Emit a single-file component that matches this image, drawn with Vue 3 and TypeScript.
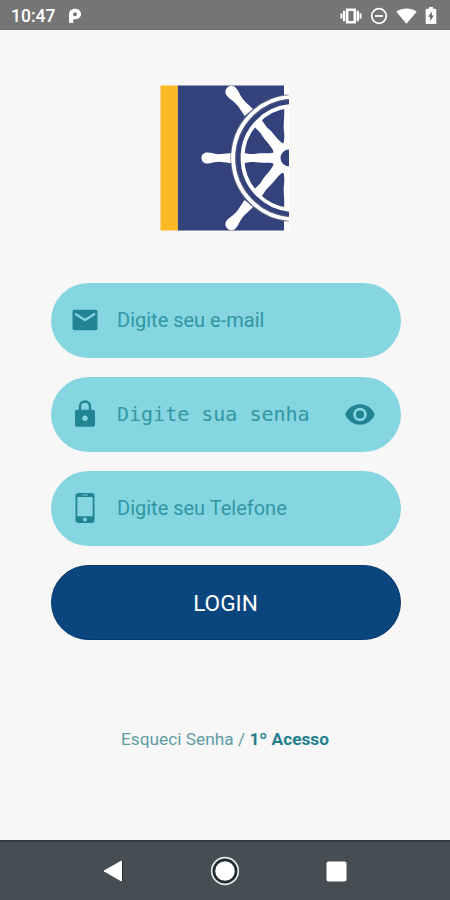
<script setup lang="ts">
import { ref } from 'vue'

const email = ref('')
const password = ref('')
const phone = ref('')
const showPassword = ref(false)

// Rotation and length of each wheel spoke around the hub
const spokes = [
  { angle: 0, scale: 1 },
  { angle: 50, scale: 1.08 },
  { angle: -50, scale: 1.08 },
]
</script>

<template>
  <div class="screen">
    <header class="status">
      <span class="clock">10:47</span>
      <svg class="p-icon" width="14" height="16" viewBox="0 0 14 16">
        <path fill="#fff" fill-rule="evenodd" d="M1 15V6.500C1 3 3.500.8 7 .8s6 2.100 6 5.300-2.400 5.200-5.700 5.200H5.200V15zM7 4.300a2 2 0 1 0 0 4 2 2 0 0 0 0-4z" />
      </svg>
      <div class="status-icons">
        <svg width="22" height="16" viewBox="0 0 22 16" fill="#fff">
          <path fill-rule="evenodd" d="M6 .5h10v15H6zM8.500 3v10h5V3z" />
          <path d="M3 2.700h2.400v10.600H3zM.5 5.500h2v5h-2zM16.600 2.700H19v10.600h-2.400zM19.500 5.500h2v5h-2z" />
        </svg>
        <svg width="18" height="18" viewBox="0 0 18 18">
          <circle cx="9" cy="9" r="7.300" fill="none" stroke="#fff" stroke-width="1.700" />
          <path d="M5 9h8" stroke="#fff" stroke-width="1.800" />
        </svg>
        <svg width="21" height="16" viewBox="0 0 21 16">
          <path fill="#fff" d="M.3 3.800C6.200-.5 14.800-.5 20.700 3.800L10.500 15.800z" />
        </svg>
        <svg width="12" height="17" viewBox="0 0 12 17">
          <path fill="#fff" d="M4 0h4v1.800h2.300a1 1 0 0 1 1 1V16a1 1 0 0 1-1 1H1.700a1 1 0 0 1-1-1V2.800a1 1 0 0 1 1-1H4z" />
          <path fill="#666" d="M6.800 4.500v4h2L5.200 14v-4.200h-2z" />
        </svg>
      </div>
    </header>

    <main class="content">
      <svg class="logo" width="129" height="146" viewBox="160 85 129 146">
        <path fill="#fff" d="M283 85h6v146h-6z" />
        <path fill="#33427b" d="M177.500 85.500H284v145H177.500z" />
        <path fill="#fbba25" d="M160.500 85.500h17.300v145h-17.300z" />
        <path fill="#33427b" d="M283 95h6v126h-6z" />
        <g fill="#fff">
          <g
            v-for="spoke in spokes"
            :key="spoke.angle"
            :transform="`translate(287 158) rotate(${spoke.angle}) scale(${spoke.scale}) translate(-287 -158)`"
          >
            <path d="M201.500 158c0-3.200 2.200-5.500 5.500-5.500 5 0 8 2 14 1.600 4-.3 7-.9 11-1.100v10c-4-.2-7-.8-11-1.100-6-.4-9 1.600-14 1.600-3.300 0-5.500-2.300-5.500-5.500z" />
            <path d="M243 153.200c5 0 8 1.300 13 .5 7-1 11 .3 17-1l10-5v20.600l-10-5c-6-1.300-10 0-17-1-5-.8-8 .5-13 .5z" />
          </g>
          <path d="M284 107h5v42h-8c3-5 4-11 3-18-1-7 1-15 0-24zM284 209h5v-42h-8c3 5 4 11 3 18-1 7 1 15 0 24z" />
        </g>
        <circle cx="294.500" cy="158" r="56.500" fill="none" stroke="#33427b" stroke-width="7" />
        <circle cx="294.500" cy="158" r="63.800" fill="none" stroke="#777786" stroke-width=".8" />
        <circle cx="294.500" cy="158" r="61.200" fill="none" stroke="#fff" stroke-width="4" />
        <circle cx="294.500" cy="158" r="52" fill="none" stroke="#fff" stroke-width="3.800" />
        <circle cx="294.500" cy="158" r="59" fill="none" stroke="#6d708a" stroke-width=".7" />
        <circle cx="289" cy="158" r="13" fill="#fff" />
        <circle cx="289" cy="158" r="8.500" fill="#33427b" />
      </svg>

      <form class="form" @submit.prevent>
        <label class="field">
          <svg class="icon" width="26" height="26" viewBox="0 0 26 26">
            <rect x=".5" y="2.800" width="25" height="20.400" rx="2" fill="#218492" />
            <path d="M3 6.700L13 13l10-6.300" fill="none" stroke="#85d6e1" stroke-width="2.400" />
          </svg>
          <input v-model="email" type="email" placeholder="Digite seu e-mail" />
        </label>
        <label class="field">
          <svg class="icon" width="26" height="28" viewBox="0 0 26 28">
            <path d="M8 11V6.500a5 5 0 0 1 10 0V11" fill="none" stroke="#218492" stroke-width="2.400" />
            <rect x="3" y="9.800" width="20" height="17" rx="2" fill="#218492" />
            <circle cx="13" cy="18.300" r="2.700" fill="#85d6e1" />
          </svg>
          <input v-model="password" class="mono" :type="showPassword ? 'text' : 'password'" placeholder="Digite sua senha" />
          <button class="eye" type="button" @click="showPassword = !showPassword">
            <svg width="30" height="21" viewBox="0 0 30 21">
              <path fill="#218492" fill-rule="evenodd" d="M15 .3C8.200.3 2.500 4.500.2 10.500 2.500 16.500 8.200 20.700 15 20.700s12.500-4.200 14.800-10.200C27.500 4.500 21.800.3 15 .3zM15 17.300a6.800 6.800 0 1 1 0-13.600 6.800 6.800 0 0 1 0 13.600zM15 6.400a4.100 4.100 0 1 0 0 8.200 4.100 4.100 0 0 0 0-8.200z" />
            </svg>
          </button>
        </label>
        <label class="field">
          <svg class="icon" width="26" height="32" viewBox="0 0 26 32">
            <path fill="#218492" fill-rule="evenodd" d="M6.500 1h13a3 3 0 0 1 3 3v24a3 3 0 0 1-3 3h-13a3 3 0 0 1-3-3V4a3 3 0 0 1 3-3zM5.300 5v19.300h15.400V5z" />
            <circle cx="13" cy="27.500" r="1.900" fill="#85d6e1" />
            <path d="M10 3h6" stroke="#85d6e1" stroke-width=".8" />
          </svg>
          <input v-model="phone" type="tel" placeholder="Digite seu Telefone" />
        </label>
        <button class="login" type="submit">LOGIN</button>
      </form>

      <p class="links"><span>Esqueci Senha / </span><b>1º Acesso</b></p>
    </main>

    <nav class="navbar">
      <svg width="20" height="24" viewBox="0 0 20 24">
        <path d="M18.500 2v20L1 12z" fill="#fff" stroke="#fff" stroke-linejoin="round" />
        <path d="M19.500 2v20" stroke="#1d2c31" />
      </svg>
      <svg width="30" height="30" viewBox="0 0 30 30">
        <circle cx="15" cy="15" r="13.300" fill="#1d2c31" stroke="#e5eaeb" stroke-width="1.700" />
        <circle cx="15" cy="15" r="9.800" fill="#fff" />
      </svg>
      <svg width="21" height="21" viewBox="0 0 21 21">
        <rect x=".5" y=".5" width="20" height="20" rx="2" fill="#fff" />
      </svg>
    </nav>
  </div>
</template>

<style>
body {
  margin: 0;
}
</style>

<style scoped>
.screen {
  width: 450px;
  height: 900px;
  display: flex;
  flex-direction: column;
  background: #f7f7f7;
  font-family: Roboto, sans-serif;
  overflow: hidden;
}
.status {
  box-sizing: border-box;
  height: 30px;
  padding: 2px 13px 0 11px;
  display: flex;
  align-items: center;
  background: #757575;
  border-bottom: 1px solid #6b6b6b;
  color: #fff;
}
.clock {
  width: 57px;
  font-size: 17.500px;
  font-weight: 500;
}
.status-icons {
  margin-left: auto;
  display: flex;
  align-items: center;
  gap: 8px;
}
.content {
  flex: 1;
  display: flex;
  flex-direction: column;
  align-items: center;
}
.logo {
  margin-top: 55px;
  margin-left: -1px;
}
.form {
  width: 350px;
  margin-top: 51.600px;
  margin-left: 1px;
  display: flex;
  flex-direction: column;
  gap: 19px;
}
.field,
.login {
  box-sizing: border-box;
  height: 75px;
  border-radius: 38px;
}
.field {
  display: flex;
  align-items: center;
  padding: 0 26px 0 21px;
  background: #85d6e1;
}
.icon {
  flex: none;
}
input {
  flex: 1;
  min-width: 0;
  margin-left: 19.500px;
  padding: 0;
  border: 0;
  outline: 0;
  background: transparent;
  font: 400 20px Roboto, sans-serif;
  color: #218492;
}
input::placeholder {
  color: #3296a3;
  opacity: 1;
}
.mono {
  font: 400 20px "DejaVu Sans Mono", monospace;
}
.eye {
  display: flex;
  padding: 0;
  border: 0;
  background: none;
}
.login {
  border: 1px solid #06376d;
  background: #0a457d;
  color: #fff;
  font: 400 22.600px Roboto, sans-serif;
  padding-top: 3px;
}
.links {
  margin: 88.400px 0 0;
  font-size: 17.300px;
  line-height: 22px;
  color: #5f9ca5;
  white-space: nowrap;
}
.links b {
  color: #247f8c;
}
.navbar {
  box-sizing: border-box;
  height: 60px;
  padding: 0 103px;
  display: flex;
  align-items: center;
  justify-content: space-between;
  background: #464e53;
  border-top: 2px solid #303c40;
}
</style>
